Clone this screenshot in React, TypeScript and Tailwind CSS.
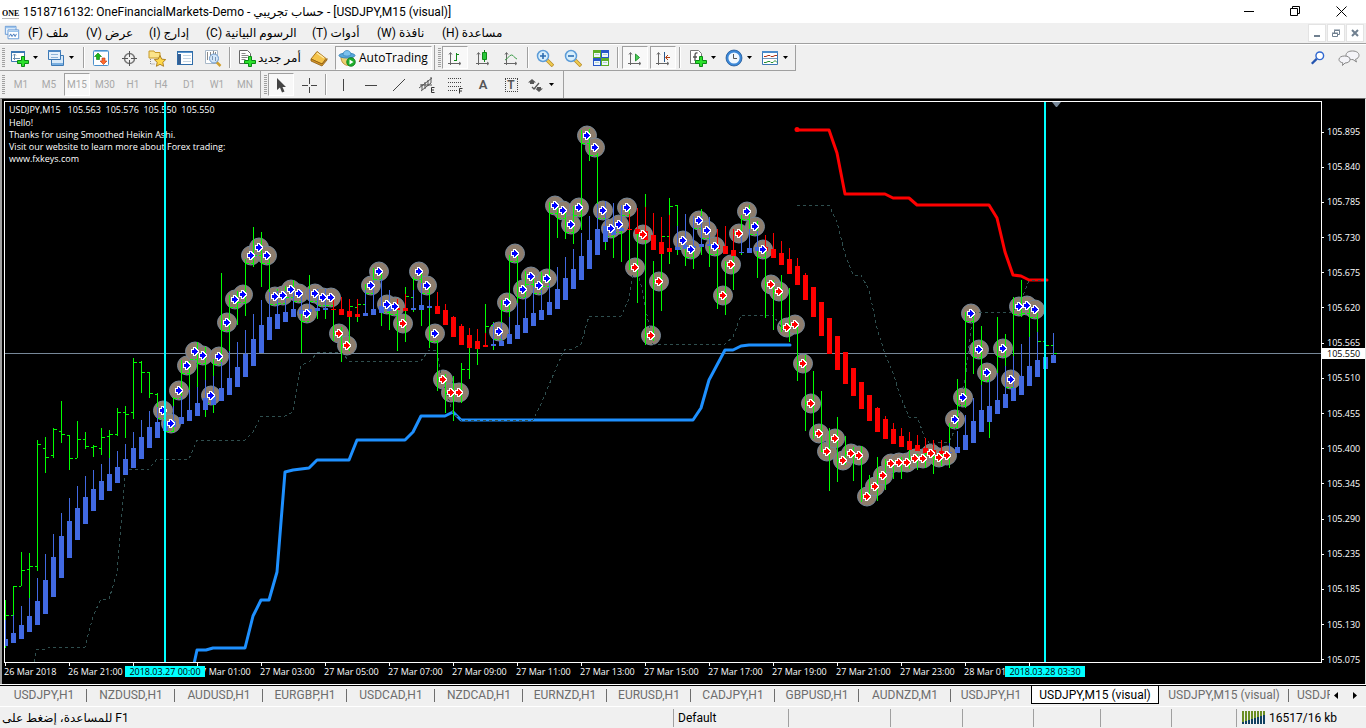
import type { ReactNode } from "react";
import clsx from "clsx";

// Chart data: plot coordinates, bars are spaced BAR_STEP apart from FIRST_BAR.
const FIRST_BAR = 5;
const BAR_STEP = 8;
const barX = (i: number) => FIRST_BAR + i * BAR_STEP;

type Trend = "u" | "d";

// smoothed heikin ashi: trend, wick top, body top, body bottom
const heikin: [Trend, number, number, number][] = [
  ["u", 620, 639, 646], ["u", 615, 633, 643], ["u", 606, 625, 639], ["u", 598, 616, 632],
  ["u", 578, 601, 625], ["u", 554, 580, 614], ["u", 534, 557, 597], ["u", 513, 536, 578],
  ["u", 498, 521, 558], ["u", 486, 508, 540], ["u", 476, 497, 524], ["u", 470, 489, 511],
  ["u", 464, 481, 500], ["u", 458, 474, 491], ["u", 451, 467, 483], ["u", 444, 459, 475],
  ["u", 432, 448, 468], ["u", 420, 437, 459], ["u", 411, 427, 448], ["u", 407, 422, 438],
  ["u", 404, 421, 431], ["u", 406, 421, 427], ["u", 396, 417, 424], ["u", 390, 410, 421],
  ["u", 387, 403, 416], ["u", 380, 398, 410], ["u", 376, 396, 405], ["u", 362, 388, 401],
  ["u", 351, 378, 395], ["u", 342, 367, 387], ["u", 330, 354, 377], ["u", 314, 339, 366],
  ["u", 300, 325, 353], ["u", 292, 317, 340], ["u", 291, 314, 329], ["u", 291, 312, 322],
  ["u", 290, 309, 317], ["u", 290, 310, 314], ["u", 289, 309, 312], ["u", 289, 308, 311],
  ["u", 289, 308, 310], ["d", 300, 309, 310], ["d", 297, 309, 315], ["d", 299, 311, 317],
  ["d", 299, 314, 317], ["u", 290, 313, 316], ["u", 280, 309, 315], ["u", 279, 306, 313],
  ["u", 290, 306, 311], ["d", 299, 308, 310], ["d", 294, 308, 311], ["u", 290, 308, 310],
  ["u", 283, 305, 310], ["u", 300, 306, 308], ["d", 292, 306, 314], ["d", 304, 310, 325],
  ["d", 316, 317, 337], ["d", 324, 326, 345], ["d", 328, 335, 348], ["d", 329, 341, 349],
  ["d", 333, 345, 347], ["u", 323, 344, 346], ["u", 323, 341, 346], ["u", 317, 334, 344],
  ["u", 303, 325, 339], ["u", 297, 318, 333], ["u", 287, 313, 326], ["u", 290, 310, 320],
  ["u", 283, 302, 315], ["u", 267, 289, 309], ["u", 257, 278, 300], ["u", 249, 269, 289],
  ["u", 233, 256, 280], ["u", 216, 240, 269], ["u", 204, 229, 255], ["u", 201, 226, 242],
  ["u", 203, 226, 235], ["u", 205, 228, 231], ["d", 214, 229, 230], ["d", 208, 229, 234],
  ["d", 207, 231, 240], ["d", 213, 235, 250], ["d", 217, 242, 254], ["d", 215, 248, 252],
  ["u", 226, 247, 250], ["u", 214, 245, 249], ["u", 216, 246, 248], ["u", 216, 244, 247],
  ["u", 217, 244, 246], ["d", 229, 245, 249], ["d", 226, 246, 254], ["d", 229, 250, 256],
  ["u", 235, 252, 253], ["u", 229, 248, 253], ["u", 231, 247, 251], ["d", 235, 247, 251],
  ["d", 233, 249, 258], ["d", 241, 253, 265], ["d", 248, 259, 274], ["d", 258, 266, 285],
  ["d", 273, 275, 300], ["d", 287, 287, 317], ["d", 302, 302, 336], ["d", 318, 318, 354],
  ["d", 336, 336, 370], ["d", 352, 352, 384], ["d", 368, 368, 396], ["d", 382, 382, 409],
  ["d", 395, 395, 421], ["d", 407, 408, 432], ["d", 416, 419, 439], ["d", 423, 429, 444],
  ["d", 428, 436, 447], ["d", 432, 441, 450], ["d", 435, 445, 451], ["d", 438, 448, 453],
  ["d", 440, 450, 454], ["d", 440, 451, 454], ["u", 443, 452, 453], ["u", 431, 447, 453],
  ["u", 415, 435, 450], ["u", 398, 421, 443], ["u", 385, 410, 432], ["u", 380, 406, 422],
  ["u", 373, 400, 414], ["u", 366, 394, 408], ["u", 356, 388, 401], ["u", 344, 376, 395],
  ["u", 337, 366, 386], ["u", 332, 360, 377], ["u", 345, 357, 369], ["u", 333, 355, 363],
];

// raw price range: high, low
const prices: [number, number][] = [
  [600, 648], [586, 616], [552, 586], [553, 598], [440, 571], [437, 473], [428, 458], [401, 443],
  [435, 470], [421, 458], [432, 449], [445, 457], [428, 455], [430, 474], [408, 436], [406, 438],
  [358, 419], [361, 393], [372, 398], [393, 418], [398, 431], [397, 432], [360, 399], [361, 393],
  [342, 388], [347, 417], [359, 413], [273, 364], [295, 352], [291, 325], [259, 316], [227, 267],
  [232, 287], [259, 296], [289, 303], [286, 299], [280, 302], [292, 353], [275, 320], [290, 319],
  [292, 319], [297, 341], [327, 362], [317, 351], [299, 322], [284, 305], [268, 286], [273, 326],
  [300, 330], [310, 351], [287, 342], [277, 312], [272, 326], [285, 348], [340, 391], [374, 413],
  [376, 421], [363, 403], [348, 379], [349, 365], [304, 347], [322, 350], [300, 341], [255, 318],
  [255, 303], [271, 297], [277, 297], [272, 292], [202, 285], [207, 238], [210, 239], [206, 244],
  [130, 230], [129, 161], [153, 206], [202, 250], [223, 258], [220, 262], [208, 270], [233, 303],
  [194, 345], [261, 341], [253, 311], [198, 264], [205, 255], [240, 266], [227, 269], [209, 255],
  [220, 267], [243, 309], [261, 315], [256, 290], [215, 255], [205, 235], [221, 278], [250, 318],
  [280, 330], [275, 332], [288, 342], [323, 381], [355, 431], [371, 439], [391, 452], [428, 491],
  [417, 482], [436, 465], [447, 481], [446, 502], [475, 496], [457, 501], [459, 490], [460, 479],
  [457, 479], [450, 469], [454, 470], [453, 468], [454, 474], [454, 466], [423, 468], [379, 428],
  [312, 408], [316, 374], [326, 385], [369, 438], [317, 373], [334, 387], [297, 386], [280, 317],
  [307, 338], [313, 334],
];

// open / close notches that sit outside the signal markers: bar, open, close
const notches: [number, number | null, number | null][] = [
  [0, null, 615], [1, 615, 586], [2, 586, 570], [3, 569, 566], [4, 566, 444], [5, 448, 457],
  [6, 455, 429], [7, 431, 434], [8, 435, 458], [9, 458, 439], [10, 439, 446], [11, 447, 446],
  [12, 448, 437], [13, 436, 434], [14, 434, 412], [15, 412, 414], [16, 412, 362], [17, 362, 372],
  [18, 372, 393], [19, 394, null], [43, null, 306], [44, 307, 304], [45, 304, null],
  [50, null, 296], [51, 297, null], [57, null, 369], [58, 369, null], [60, null, 326],
  [61, 325, null], [82, null, 236], [83, 236, 206], [84, 205, null], [123, 381, null],
  [129, null, 341], [130, 341, 345], [131, 345, 353],
];

// signal markers: bar, direction, y
const signals: [number, Trend, number][] = [
  [20, "u", 410], [21, "u", 423], [22, "u", 390], [23, "u", 365], [24, "u", 351], [25, "u", 355],
  [26, "u", 395], [27, "u", 356], [28, "u", 322], [29, "u", 299], [30, "u", 294], [31, "u", 255],
  [32, "u", 247], [33, "u", 255], [34, "u", 296], [35, "u", 295], [36, "u", 289], [37, "u", 293],
  [38, "u", 313], [39, "u", 293], [40, "u", 297], [41, "u", 297], [42, "d", 333], [43, "d", 345],
  [46, "u", 285], [47, "u", 271], [48, "u", 304], [49, "u", 306], [50, "d", 323], [52, "u", 271],
  [53, "u", 285], [54, "u", 333], [55, "d", 379], [56, "d", 392], [57, "d", 392], [62, "u", 331],
  [63, "u", 302], [64, "u", 253], [65, "u", 289], [66, "u", 276], [67, "u", 285], [68, "u", 278],
  [69, "u", 205], [70, "u", 210], [71, "u", 224], [72, "u", 207], [73, "u", 135], [74, "u", 147],
  [75, "u", 210], [76, "u", 228], [77, "u", 224], [78, "u", 207], [79, "d", 267], [80, "d", 234],
  [81, "d", 335], [82, "d", 281], [85, "u", 240], [86, "u", 249], [87, "u", 220], [88, "u", 230],
  [89, "u", 246], [90, "d", 295], [91, "d", 264], [92, "d", 233], [93, "u", 211], [94, "u", 226],
  [95, "u", 249], [96, "d", 284], [97, "d", 291], [98, "d", 327], [99, "d", 324], [100, "d", 363],
  [101, "d", 403], [102, "d", 433], [103, "d", 451], [104, "d", 438], [105, "d", 460], [106, "d", 453],
  [107, "d", 455], [108, "d", 496], [109, "d", 486], [110, "d", 475], [111, "d", 463], [112, "d", 462],
  [113, "d", 462], [114, "d", 458], [115, "d", 458], [116, "d", 453], [117, "d", 457], [118, "d", 455],
  [119, "u", 419], [120, "u", 397], [121, "u", 313], [122, "u", 349], [123, "u", 372], [125, "u", 348],
  [126, "u", 379], [127, "u", 306], [128, "u", 305], [129, "u", 309],
];

const support =
  "194,664 197,650 206,650 213,648 245,648 253,616 261,600 269,600 277,572 285,472 293,470 309,468 317,460 349,460 357,440 405,440 413,432 421,416 445,416 453,412 461,420 693,420 701,408 709,380 717,365 725,350 733,350 741,346 749,345 790,345";
const resistance =
  "797,130 829,130 837,153 845,194 885,194 893,198 909,198 917,205 989,205 997,218 1005,252 1013,275 1021,276 1029,280 1047,280";
const dashed = [
  "34,662 37,649 45,649 51,647 85,647 93,616 101,599 109,599 117,573 119,550 125,475 129,470 149,469 157,459 189,459 197,440 245,440 253,432 261,416 285,416 293,412 301,365 309,362 317,353 341,352 349,361 421,361 429,350 437,350 441,375 453,413 461,420 533,420 541,404 557,366 565,349 573,349 581,344 589,316 621,316 629,299 633,272 637,271 641,285 651,335 653,344 725,344 733,337 741,315 773,315 783,330",
  "797,205 829,205 837,222 845,254 853,275 861,275 869,290 877,328 885,354 893,373 901,398 909,417 917,417 925,438 931,445 941,442 949,442 957,425 965,380 973,312 1013,312 1021,300 1029,281 1045,280",
];

const priceLabels = [
  "105.895", "105.840", "105.785", "105.730", "105.675", "105.620", "105.565", "105.510",
  "105.455", "105.400", "105.345", "105.290", "105.235", "105.185", "105.130", "105.075",
];

// blank entries keep their tick; the cursor dates cover their text
const timeLabels = [
  "26 Mar 2018", "26 Mar 21:00", "", "27 Mar 01:00", "27 Mar 03:00", "27 Mar 05:00",
  "27 Mar 07:00", "27 Mar 09:00", "27 Mar 11:00", "27 Mar 13:00", "27 Mar 15:00", "27 Mar 17:00",
  "27 Mar 19:00", "27 Mar 21:00", "27 Mar 23:00", "28 Mar 01", "",
];

const menus = [
  { label: "ملف (F)", width: "w-[58px]" },
  { label: "عرض (V)", width: "w-[63px]" },
  { label: "إدارج (I)", width: "w-[57px]" },
  { label: "الرسوم البيانية (C)", width: "w-[106px]" },
  { label: "أدوات (T)", width: "w-[65px]" },
  { label: "نافذة (W)", width: "w-[65px]" },
  { label: "مساعدة (H)", width: "w-[65px]" },
];

const tabs = [
  { label: "USDJPY,H1", width: "w-[86px]" },
  { label: "NZDUSD,H1", width: "w-[88px]" },
  { label: "AUDUSD,H1", width: "w-[88px]" },
  { label: "EURGBP,H1", width: "w-[84px]" },
  { label: "USDCAD,H1", width: "w-[88px]" },
  { label: "NZDCAD,H1", width: "w-[88px]" },
  { label: "EURNZD,H1", width: "w-[84px]" },
  { label: "EURUSD,H1", width: "w-[84px]" },
  { label: "CADJPY,H1", width: "w-[84px]" },
  { label: "GBPUSD,H1", width: "w-[84px]" },
  { label: "AUDNZD,M1", width: "w-[92px]" },
  { label: "USDJPY,H1", width: "w-[80px]" },
  { label: "USDJPY,M15 (visual)", width: "w-[128px]", active: true },
  { label: "USDJPY,M15 (visual)", width: "w-[130px]" },
];

const timeframes = ["M1", "M5", "M15", "M30", "H1", "H4", "D1", "W1", "MN"];

const trendColor = { u: "#4169e1", d: "#ff0000" };

function Plot() {
  return (
    <svg className="absolute inset-0 h-full w-full" viewBox="5 102 1316 560" preserveAspectRatio="none">
      <path d="M5 353.5H1322" stroke="#778899" />
      <g fill="none" strokeWidth="3" strokeLinejoin="round" strokeLinecap="round">
        <polyline points={support} stroke="#1e90ff" />
        <polyline points={resistance} stroke="#ff0000" />
      </g>
      <circle cx="797" cy="129.5" r="2.5" fill="#ff0000" />
      <g fill="#8e7d6d" stroke="#778899">
        {signals.map(([i, , y]) => (
          <circle key={i} cx={barX(i) - 2} cy={y + 0.5} r="9.5" />
        ))}
      </g>
      <g fill="none" stroke="#2f4f4f" strokeDasharray="3 3" shapeRendering="crispEdges">
        {dashed.map((points) => (
          <polyline key={points} points={points} />
        ))}
      </g>
      <g fill="#00ff00">
        {signals.map(([i, dir, y]) => (
          <path
            key={i}
            d={`M${barX(i) - 7} ${dir === "u" ? y + 8 : y}h3v1h-3zM${barX(i) - 2} ${dir === "u" ? y + 8 : y}h2v1h-2z`}
          />
        ))}
        {prices.map(([high, low], i) => (
          <rect key={i} x={barX(i)} y={high} width="1" height={low - high} />
        ))}
        {notches.map(([i, open, close]) => (
          <g key={i}>
            {open !== null && <rect x={barX(i) - 2} y={open} width="2" height="1" />}
            {close !== null && <rect x={barX(i) + 1} y={close} width="3" height="1" />}
          </g>
        ))}
      </g>
      {heikin.map(([dir, wick, top, bottom], i) => (
        <path
          key={i}
          d={`M${barX(i)} ${wick}h1V${top}h-1zM${barX(i) - 2} ${top}h5V${bottom}h-5z`}
          fill={trendColor[dir]}
        />
      ))}
      {signals.map(([i, dir, y]) => (
        <path
          key={i}
          transform={`translate(${barX(i) - 2} ${y + 0.5})`}
          d="M-3 -1.5H-1V-3.5H0V-2.5H1V-1.5H2V-.5H3V.5H2V1.5H1V2.5H0V3.5H-1V1.5H-3z"
          fill={dir === "u" ? "#0000ff" : "#ff0000"}
          stroke="#fff"
          strokeWidth="2"
          paintOrder="stroke"
          shapeRendering="crispEdges"
        />
      ))}
      <path d="M1052 102H1061L1057 107H1056z" fill="#778899" />
      <path d="M165 102V662M1045 102V662" stroke="#00ffff" strokeWidth="2" />
    </svg>
  );
}

function Chart() {
  return (
    <section className="flex min-h-0 flex-1 border-l-2 border-t border-r border-l-[#a0a0a0] border-r-[#e3e3e3] border-t-[#696969] bg-black pl-[2px] pt-[2px] font-['Open_Sans','Noto_Sans',sans-serif] text-[9px] leading-3 text-white">
      <div className="flex min-w-0 flex-1 flex-col">
        <div className="relative min-h-0 flex-1 border border-white">
          <div className="whitespace-pre pl-1 pt-[2px]">
            <p className="mb-px">USDJPY,M15   105.563  105.576  105.550  105.550</p>
            <p>Hello!</p>
            <p>Thanks for using Smoothed Heikin Ashi.</p>
            <p>Visit our website to learn more about Forex trading:</p>
            <p>www.fxkeys.com</p>
          </div>
          <Plot />
        </div>
        <div className="relative h-[21px] overflow-hidden">
          <div className="flex">
            {timeLabels.map((label, i) => (
              <div key={i} className="w-16 shrink-0 whitespace-nowrap">
                <div className="ml-px h-[3px] w-px bg-white" />
                {label}
              </div>
            ))}
          </div>
          <span className="absolute left-[121px] top-[3px] h-[11px] w-20 bg-[#00ffff] text-center leading-[11px] text-black">
            2018.03.27 00:00
          </span>
          <span className="absolute left-[1001px] top-[3px] h-[11px] w-20 bg-[#00ffff] text-center leading-[11px] text-black">
            2018.03.28 03:30
          </span>
        </div>
      </div>
      <div className="relative flex w-[43px] shrink-0 flex-col justify-between pb-[18px] pt-[25px]">
        {priceLabels.map((label) => (
          <div key={label} className="flex items-center gap-[3px]">
            <span className="h-px w-[2px] bg-white" />
            {label}
          </div>
        ))}
        <span className="absolute left-0 top-[247px] h-[11px] w-full bg-white pl-[5px] leading-[11px] text-black">
          105.550
        </span>
      </div>
    </section>
  );
}

function Icon({ children, size = 18 }: { children: ReactNode; size?: number }) {
  return (
    <svg width={size} height={size} viewBox="0 0 18 18" fill="none" className="shrink-0" aria-hidden>
      {children}
    </svg>
  );
}

function Caret() {
  return (
    <svg width="5" height="3" viewBox="0 0 5 3" aria-hidden>
      <path d="M0 0H5L2.5 3z" fill="#000" />
    </svg>
  );
}

function Tool({ label, pressed, children }: { label: string; pressed?: boolean; children: ReactNode }) {
  return (
    <button
      aria-label={label}
      className={clsx(
        "mx-px flex h-[23px] w-[26px] shrink-0 items-center justify-center border",
        pressed ? "border-white border-l-[#a0a0a0] border-t-[#a0a0a0] bg-[#f8f8f8]" : "border-transparent",
      )}
    >
      {children}
    </button>
  );
}

function DropTool({ label, children }: { label: string; children: ReactNode }) {
  return (
    <button aria-label={label} className="flex h-[23px] w-9 shrink-0 items-center gap-1 pl-[2px]">
      {children}
      <Caret />
    </button>
  );
}

function Sep() {
  return (
    <div className="flex w-[6px] shrink-0 justify-center">
      <div className="h-[21px] w-[2px] border-r border-white bg-[#a0a0a0]" />
    </div>
  );
}

function Grip() {
  return (
    <div className="w-[9px] shrink-0 pl-[2px]">
      <div className="h-5 w-[3px] bg-[repeating-linear-gradient(#a0a0a0_0_1px,#f0f0f0_1px_2px)]" />
    </div>
  );
}

const plus = <path d="M10.500 7.500h3v4h4v3h-4v3h-3v-3h-4v-3h4z" fill="#2be02b" stroke="#0a8a14" />;
const axes = (
  <path d="M4.500 4v12M2 14.500h12M3 5.500l1.500-2L6 5.500M13 13l2 1.500l-2 1.500" stroke="#666" />
);

function ChartToolbar() {
  return (
    <div className="flex h-[27px] items-center border-t border-white">
      <div className="flex h-[26px] items-center border-b border-r border-[#a0a0a0]">
        <Grip />
        <DropTool label="New chart">
          <Icon>
            <path d="M.5 2.500h13v10H.5z" fill="#fff" stroke="#3c78b4" />
            <path d="M0 3h14" stroke="#3c78b4" strokeWidth="2" />
            <path d="M3.500 5v6M2 9.500h7M2 6.500l1.500-1.500L5 6.500" stroke="#6c8fb0" />
            {plus}
          </Icon>
        </DropTool>
        <DropTool label="Profiles">
          <Icon>
            <path d="M4.500 6.500h12v10h-12z" fill="#d8e9f8" stroke="#3c78b4" />
            <path d="M5 15h11" stroke="#78aee0" strokeWidth="2" />
            <path d="M1.500 1.500h12v9h-12z" fill="#e6f2fc" stroke="#3c78b4" />
            <path d="M1 2h13" stroke="#4b87c4" strokeWidth="2" />
            <path d="M4 5.500h7M4 8.500h7" stroke="#8fb4d8" />
          </Icon>
        </DropTool>
        <Sep />
        <Tool label="Market Watch">
          <Icon>
            <rect x="1.500" y="1.500" width="15" height="15" rx="1" fill="#fff" stroke="#4a90cc" />
            <path d="M2 2.500h14" stroke="#8cc0ea" />
            <path d="M6 4l3.500 3.500h-2v3h-3v-3h-2z" fill="#18b818" stroke="#087808" strokeWidth=".6" />
            <path d="M11.500 15.500L15 12h-2V9h-3v3H8z" fill="#ff6a2a" stroke="#b83410" strokeWidth=".6" />
          </Icon>
        </Tool>
        <Tool label="Data Window">
          <Icon>
            <circle cx="9.500" cy="9.500" r="5" stroke="#777" strokeWidth="1.500" />
            <path d="M9.500 2v6M9.500 11v6M2 9.500h6M11 9.500h6" stroke="#555" />
          </Icon>
        </Tool>
        <Tool label="Navigator">
          <Icon>
            <path d="M1 3V2h5l1 1.500h5V9H1z" fill="#fbe48a" stroke="#c79a28" />
            <path d="M2.500 10v5h5" stroke="#888" strokeDasharray="1 1" />
            <path d="M12 6.500l1.700 3.600 4 .5-2.900 2.700.8 4-3.600-2-3.600 2 .8-4L6.300 10.600l4-.5z" fill="#ffd94a" stroke="#a87818" strokeWidth=".9" />
          </Icon>
        </Tool>
        <Tool label="Terminal">
          <Icon>
            <rect x="1.500" y="2.500" width="15" height="13" fill="#fff" stroke="#2f6ca8" />
            <path d="M2 3.500h14" stroke="#5c98d0" />
            <path d="M2 5h3v10H2z" fill="#345e92" />
            <path d="M7 6.500h8M7 9.500h8M7 12.500h8" stroke="#c4d4e2" />
          </Icon>
        </Tool>
        <Tool label="Strategy Tester">
          <Icon>
            <path d="M1.500 1.500h12v13h-12z" fill="#fff" stroke="#a8b8c8" />
            <path d="M3.500 3v8M6.500 3v4M9.500 2v3M11.500 3v3" stroke="#888" />
            <path d="M12.500 13l4 4" stroke="#d0a030" strokeWidth="2.500" />
            <circle cx="10" cy="9.500" r="4.500" fill="#cfe4f8" fillOpacity=".9" stroke="#6a98cc" />
            <path d="M8.500 7v4M11.500 8v4" stroke="#7896b8" />
          </Icon>
        </Tool>
        <Sep />
        <button className="flex h-[23px] w-[72px] items-center gap-[2px] pl-[5px] text-xs">
          <Icon>
            <path d="M1.500 1.500h8l3 3v10h-11z" fill="#fff" stroke="#666" />
            <path d="M3.500 4.500h4M3.500 6.500h7M3.500 8.500h6M3.500 10.500h4" stroke="#888" />
            {plus}
          </Icon>
          <span dir="rtl" className="whitespace-nowrap">أمر جديد</span>
        </button>
        <Tool label="MetaEditor">
          <Icon>
            <path d="M1 10L7 2.500l9 7-4 5.500z" fill="#f4c34a" stroke="#a8741c" />
            <path d="M1 10l11 5 5-5.500V11l-5 6L1 12z" fill="#d89828" stroke="#8a5a10" strokeWidth=".8" />
            <path d="M7 4l7 5" stroke="#fde9a8" strokeWidth="1.500" />
          </Icon>
        </Tool>
        <button className="mx-[2px] flex h-6 w-[97px] items-center gap-[3px] border border-white border-l-[#a0a0a0] border-t-[#a0a0a0] bg-[#f8f8f8] pl-[2px] font-['Open_Sans','Noto_Sans',sans-serif] text-xs">
          <Icon>
            <path d="M3 8c0 5 3 8.500 8 8.500 3 0 4-3 4-8z" fill="#ecd070" stroke="#b8943c" />
            <ellipse cx="9" cy="6.500" rx="8" ry="2.500" fill="#58a8dc" stroke="#3c88bc" />
            <path d="M5 6c0-6 8-6 8 0-2 1.500-6 1.500-8 0z" fill="#7cc2ee" stroke="#3c88bc" strokeWidth=".8" />
            <circle cx="13" cy="13" r="4.300" fill="#1fae2c" stroke="#0c7c1c" strokeWidth=".8" />
            <path d="M11.500 10.500v5l4-2.500z" fill="#fff" />
          </Icon>
          AutoTrading
        </button>
      </div>
      <div className="flex h-[26px] items-center border-b border-r border-[#a0a0a0] pl-px">
        <Grip />
        <div className="-ml-1 flex items-center">
          <Tool label="Bar chart" pressed>
            <Icon>
              {axes}
              <path d="M10.500 4v8M8 11.500h2M11 5.500h2" stroke="#108818" />
            </Icon>
          </Tool>
          <Tool label="Candlesticks">
            <Icon>
              {axes}
              <path d="M10.500 1v12" stroke="#108818" />
              <path d="M8.500 3.500h4v7h-4z" fill="#28c838" stroke="#108818" />
            </Icon>
          </Tool>
          <Tool label="Line chart">
            <Icon>
              {axes}
              <path d="M3 11c3-1 4-5 6.500-5S12 9 15 10" stroke="#3c9c48" />
            </Icon>
          </Tool>
          <Sep />
          <Tool label="Zoom in">
            <Icon>
              <path d="M11 11l6 6" stroke="#b88c28" strokeWidth="3.500" />
              <path d="M11 11l5.500 5.500" stroke="#f0cc50" strokeWidth="2" />
              <circle cx="7" cy="7" r="5.500" fill="#d8effc" stroke="#5c9cd8" strokeWidth="1.500" />
              <path d="M4 7h6M7 4v6" stroke="#2c6cb0" strokeWidth="1.600" />
            </Icon>
          </Tool>
          <Tool label="Zoom out">
            <Icon>
              <path d="M11 11l6 6" stroke="#b88c28" strokeWidth="3.500" />
              <path d="M11 11l5.500 5.500" stroke="#f0cc50" strokeWidth="2" />
              <circle cx="7" cy="7" r="5.500" fill="#d8effc" stroke="#5c9cd8" strokeWidth="1.500" />
              <path d="M4 7h6" stroke="#2c6cb0" strokeWidth="1.600" />
            </Icon>
          </Tool>
          <Tool label="Tile windows">
            <Icon>
              <path d="M1 1h8v8H1zM9 9h8v8H9z" fill="#5cae28" />
              <path d="M9 1h8v8H9zM1 9h8v8H1z" fill="#2858c8" />
              <path d="M2 4h6v4H2zM10 4h6v4h-6zM2 12h6v4H2zM10 12h6v4h-6z" fill="#eef6fc" />
              <path d="M3 5.500h4M11 5.500h4M3 13.500h4M11 13.500h4" stroke="#b8d4c8" />
            </Icon>
          </Tool>
          <Sep />
          <Tool label="Auto scroll" pressed>
            <Icon>
              {axes}
              <path d="M9.500 5v7l4-3.500z" fill="#48d058" stroke="#107c1c" strokeWidth=".8" />
            </Icon>
          </Tool>
          <Tool label="Chart shift" pressed>
            <Icon>
              {axes}
              <path d="M10.500 3v10" stroke="#28588c" />
              <path d="M16 8.500h-4M14 6l-2.500 2.500L14 11" stroke="#b03c10" />
            </Icon>
          </Tool>
          <Sep />
          <div className="w-1" />
          <DropTool label="Indicators">
            <Icon>
              <path d="M1.500 1.500h8l3 3v10h-11z" fill="#fff" stroke="#777" />
              <path d="M8.500 4C6 3.500 6 5 6 7v5M4 8h4" stroke="#555" strokeWidth="1.300" />
              {plus}
            </Icon>
          </DropTool>
          <DropTool label="Periods">
            <Icon>
              <circle cx="9" cy="9" r="6.800" fill="#f0f8ff" stroke="#3c88d8" strokeWidth="2.400" />
              <circle cx="9" cy="9" r="8" stroke="#164c8c" strokeWidth=".7" />
              <path d="M8.500 5v4.500H12" stroke="#555" />
            </Icon>
          </DropTool>
          <DropTool label="Templates">
            <Icon>
              <path d="M1.500 2.500h15v13h-15z" fill="#fff" stroke="#3c78b4" />
              <path d="M1 3h16" stroke="#4a8ccc" strokeWidth="2" />
              <path d="M2 9.500h14" stroke="#7898b8" />
              <path d="M3 7.500h2l2-1h2l1 1h2l2-1h2" stroke="#b03418" />
              <path d="M3 13.500h2l2-1h2l1 1h2l2-2 2 2" stroke="#289030" />
            </Icon>
          </DropTool>
        </div>
      </div>
      <div className="ml-auto flex items-center gap-3 pr-[6px]">
        <button aria-label="Search">
          <Icon size={16}>
            <circle cx="11" cy="6.500" r="4.300" fill="#fff" stroke="#3068d0" strokeWidth="1.600" />
            <path d="M7.500 10L2 15.500" stroke="#2454b0" strokeWidth="2.600" />
          </Icon>
        </button>
        <button aria-label="Chat">
          <svg width="22" height="18" viewBox="0 0 22 18" fill="#f4f4f8" stroke="#888" aria-hidden>
            <path d="M14.500 2c4 0 6.500 1.800 6.500 4.300 0 2-1.500 3.400-3.500 4l1 2.700-3.500-2.400C11 10.700 8 9 8 6.300S10.500 2 14.500 2z" />
            <path d="M6.500 7C10 7 12 8.400 12 10.500S10 14 7 14l-2.500 2.500.3-2.700C2.500 13.400 1 12.300 1 10.500 1 8.400 3.300 7 6.500 7z" />
          </svg>
        </button>
      </div>
    </div>
  );
}

function LineToolbar() {
  return (
    <div className="flex h-[27px] items-center">
      <div className="flex h-full items-center border-r border-[#a0a0a0] pr-px">
        <Grip />
        <div className="-ml-[2px] flex text-[10px] text-[#a8a8a8]">
          {timeframes.map((frame) => (
            <Tool key={frame} label={frame} pressed={frame === "M15"}>
              {frame}
            </Tool>
          ))}
        </div>
      </div>
      <div className="flex h-full items-center border-r border-[#a0a0a0] pl-px pr-[2px]">
        <Grip />
        <div className="-ml-1 flex items-center">
          <Tool label="Cursor" pressed>
            <Icon>
              <path d="M5 2v12l3-2.500 2 5 2.500-1-2-4.500H14z" fill="#444" />
            </Icon>
          </Tool>
          <Tool label="Crosshair">
            <Icon>
              <path d="M9.500 2v6M9.500 11v6M2 9.500h6M11 9.500h6" stroke="#444" />
            </Icon>
          </Tool>
          <Sep />
          <Tool label="Vertical line">
            <Icon>
              <path d="M9.500 3v12" stroke="#444" />
            </Icon>
          </Tool>
          <Tool label="Horizontal line">
            <Icon>
              <path d="M3 9.500h12" stroke="#444" />
            </Icon>
          </Tool>
          <Tool label="Trendline">
            <Icon>
              <path d="M3 15L15 3" stroke="#444" />
            </Icon>
          </Tool>
          <Tool label="Equidistant channel">
            <Icon>
              <path d="M1 12L14 2M3 15L13 7M4 8v6M7 6v7M10 4v6M13 1v6M2 9h12" stroke="#555" />
              <path d="M16.500 11.500h-3v5h3M13.500 14h2.500" stroke="#333" />
            </Icon>
          </Tool>
          <Tool label="Fibonacci retracement">
            <Icon>
              <path d="M2 2.500h14M2 6.500h14M2 10.500h14M2 14.500h9" stroke="#444" strokeDasharray="1 1" />
              <path d="M16.500 12.500h-3v5M13.500 15h2.500" stroke="#333" />
            </Icon>
          </Tool>
          <Tool label="Text">
            <span className="text-[13px] font-semibold text-[#555]">A</span>
          </Tool>
          <Tool label="Text label">
            <span className="h-[14px] w-[13px] border border-dotted border-[#444] text-[12px] font-semibold leading-3 text-[#555]">
              T
            </span>
          </Tool>
          <DropTool label="Arrows">
            <Icon>
              <path d="M5 3l4 3.500H7V8H3V6.500H1zM12 16l-4-3.500h2V11h4v1.500h2z" fill="#555" />
              <path d="M5 11l2 2 5-6" stroke="#555" strokeWidth="1.300" />
            </Icon>
          </DropTool>
        </div>
      </div>
    </div>
  );
}

function TitleBar() {
  return (
    <header className="flex h-[23px] items-center bg-white text-xs">
      <span className="w-[23px] shrink-0 pl-[2px]">
        <span className="border-b border-[#bbb] font-['Liberation_Serif',serif] text-[8px] font-bold leading-none">
          ONE
        </span>
      </span>
      <h1 className="whitespace-nowrap">
        1518716132: OneFinancialMarkets-Demo - حساب تجريبي - <bdi dir="ltr">[USDJPY,M15 (visual)]</bdi>
      </h1>
      <div className="ml-auto flex h-full items-center pr-[2px] text-black">
        <button aria-label="Minimize" className="flex w-[46px] justify-center">
          <svg width="11" height="11" viewBox="0 0 11 11" stroke="currentColor" fill="none">
            <path d="M0 5.500h10" />
          </svg>
        </button>
        <button aria-label="Restore" className="flex w-[46px] justify-center">
          <svg width="11" height="11" viewBox="0 0 11 11" stroke="currentColor" fill="none">
            <path d="M.5 2.500h7v7h-7zM2.500 2.500v-2h7v7h-2" />
          </svg>
        </button>
        <button aria-label="Close" className="flex w-[46px] justify-center">
          <svg width="11" height="11" viewBox="0 0 11 11" stroke="currentColor" fill="none">
            <path d="M.5.5l10 10M10.500.5l-10 10" />
          </svg>
        </button>
      </div>
    </header>
  );
}

function MenuBar() {
  const box = "flex h-[18px] w-[18px] items-center justify-center border border-[#e3e3e3] bg-white";
  return (
    <nav className="flex h-[21px] items-center border-b border-[#a0a0a0] text-xs">
      <div className="w-7 shrink-0 pl-1">
        <Icon size={16}>
          <path d="M1.500 1.500h12v9h-12z" fill="#eaf3fc" stroke="#5c94d4" />
          <path d="M4.500 5.500h12v10h-12z" fill="#fff" stroke="#5c94d4" />
          <path d="M2 3h11M5 7h11" stroke="#9cc4ec" strokeWidth="1.500" />
          <path d="M6 13l1.500-3L9 13l2-3 1.500 3L14 10" stroke="#3870b8" />
        </Icon>
      </div>
      {menus.map(({ label, width }) => (
        <button key={label} className={clsx("shrink-0 whitespace-nowrap text-left", width)}>
          <span dir="rtl" className="inline-block">{label}</span>
        </button>
      ))}
      <div className="ml-auto flex gap-px pr-[2px] text-[#708090]">
        <button aria-label="Minimize chart" className={box}>
          <svg width="10" height="10" viewBox="0 0 10 10" stroke="currentColor">
            <path d="M2 8h6" strokeWidth="2" />
          </svg>
        </button>
        <button aria-label="Restore chart" className={box}>
          <svg width="10" height="10" viewBox="0 0 10 10" stroke="currentColor" fill="none">
            <path d="M1.500 5.500h5v3h-5zM3.500 5V2.500h5v4H7M1 5h6M3 2h6" />
          </svg>
        </button>
        <button aria-label="Close chart" className={box}>
          <svg width="10" height="10" viewBox="0 0 10 10" stroke="currentColor">
            <path d="M2 2l6 6M8 2L2 8" strokeWidth="2" />
          </svg>
        </button>
      </div>
    </nav>
  );
}

function ChartTabs() {
  return (
    <div className="flex h-[22px] border-t border-white pb-[2px] text-xs text-[#6d6d6d]">
      <div className="flex min-w-0 flex-1 overflow-hidden border-t border-black pl-px">
        {tabs.map(({ label, width, active }, i) => (
          <button
            key={i}
            className={clsx(
              "relative flex shrink-0 items-center justify-center whitespace-nowrap",
              width,
              active
                ? "border-x border-b border-black bg-white text-black"
                : "after:absolute after:right-0 after:top-[3px] after:h-[13px] after:w-px after:bg-[#6d6d6d]",
              i === 11 && "after:hidden",
            )}
          >
            {label}
          </button>
        ))}
        <button className="shrink-0 pl-2">USDJP</button>
      </div>
      <div className="flex w-9 items-center justify-between border-t border-black pl-1 pr-[9px]">
        <button aria-label="Scroll tabs left">
          <svg width="4" height="7" viewBox="0 0 4 7">
            <path d="M4 0v7L0 3.500z" />
          </svg>
        </button>
        <button aria-label="Scroll tabs right">
          <svg width="4" height="7" viewBox="0 0 4 7">
            <path d="M0 0v7l4-3.500z" />
          </svg>
        </button>
      </div>
    </div>
  );
}

function StatusBar() {
  const cell = "h-[18px] shrink-0 border-l border-[#a0a0a0]";
  return (
    <footer className="flex h-[22px] items-center border-t border-white text-xs">
      <div className="min-w-0 flex-1 pl-[2px]">
        <span dir="rtl" className="inline-block whitespace-nowrap">F1 للمساعدة، إضغط على</span>
      </div>
      <div className={clsx(cell, "w-[115px] pl-1 leading-[18px]")}>Default</div>
      <div className={clsx(cell, "w-[102px]")} />
      <div className={clsx(cell, "w-[72px]")} />
      <div className={clsx(cell, "w-[71px]")} />
      <div className={clsx(cell, "w-[67px]")} />
      <div className={clsx(cell, "w-[71px]")} />
      <div className={clsx(cell, "w-[65px]")} />
      <div className={clsx(cell, "flex w-[130px] items-center gap-1 pl-[5px]")}>
        <svg width="23" height="13" viewBox="0 0 23 13" shapeRendering="crispEdges" aria-hidden>
          {Array.from({ length: 8 }, (_, i) => (
            <g key={i}>
              <rect x={i * 3} y="0" width="2" height={11 - i} fill="#6b8e23" />
              <rect x={i * 3} y={11 - i} width="2" height={2 + i} fill="#104060" />
            </g>
          ))}
        </svg>
        16517/16 kb
      </div>
    </footer>
  );
}

export default function App() {
  return (
    <div className="flex h-screen flex-col overflow-hidden bg-[#f0f0f0] font-['Roboto','Open_Sans','DejaVu_Sans',sans-serif] text-black">
      <TitleBar />
      <MenuBar />
      <ChartToolbar />
      <LineToolbar />
      <Chart />
      <ChartTabs />
      <StatusBar />
    </div>
  );
}
